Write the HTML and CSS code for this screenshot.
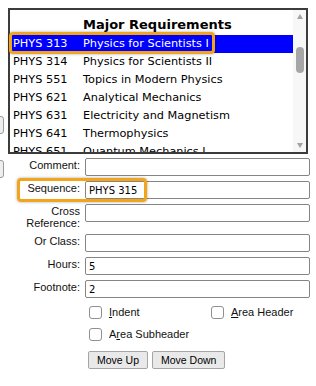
FILE: index.html
```html
<!DOCTYPE html>
<html>
<head>
<meta charset="utf-8">
<link rel="stylesheet" href="styles.css">
</head>
<body>
<div class="page">
  <div class="top">
    <div class="side">
      <div class="sidebtn"></div>
      <div class="sidebtn second"></div>
    </div>
    <div class="listbox">
      <div class="list">
        <div class="rows">
          <div class="row prev"><span>PHYS 303</span><span>Physics Laboratory</span></div>
          <div class="row head"><span></span><span>Major Requirements</span></div>
          <div class="row sel"><span>PHYS 313</span><span>Physics for Scientists I</span></div>
          <div class="row"><span>PHYS 314</span><span>Physics for Scientists II</span></div>
          <div class="row"><span>PHYS 551</span><span>Topics in Modern Physics</span></div>
          <div class="row"><span>PHYS 621</span><span>Analytical Mechanics</span></div>
          <div class="row"><span>PHYS 631</span><span>Electricity and Magnetism</span></div>
          <div class="row"><span>PHYS 641</span><span>Thermophysics</span></div>
          <div class="row"><span>PHYS 651</span><span>Quantum Mechanics I</span></div>
        </div>
      </div>
      <div class="scrollbar">
        <span class="arrow up"></span>
        <span class="thumb"></span>
        <span class="arrow down"></span>
      </div>
    </div>
  </div>

  <div class="form">
    <label class="lbl">Comment:</label>
    <input class="txt" type="text" value="">
    <label class="lbl">Sequence:</label>
    <input class="txt" type="text" value="PHYS 315">
    <label class="lbl">Cross<br>Reference:</label>
    <input class="txt" type="text" value="">
    <label class="lbl">Or Class:</label>
    <input class="txt" type="text" value="">
    <label class="lbl">Hours:</label>
    <input class="txt" type="text" value="5">
    <label class="lbl">Footnote:</label>
    <input class="txt" type="text" value="2">

    <div class="opts">
      <div class="optrow">
        <label class="opt first"><input class="cb" type="checkbox"><span><u>I</u>ndent</span></label>
        <label class="opt"><input class="cb" type="checkbox"><span><u>A</u>rea Header</span></label>
      </div>
      <div class="optrow">
        <label class="opt"><input class="cb" type="checkbox"><span>A<u>r</u>ea Subheader</span></label>
      </div>
      <div class="btns">
        <button class="btn" type="button">Move Up</button>
        <button class="btn" type="button">Move Down</button>
      </div>
    </div>
  </div>

  <div class="hl hl-row"></div>
  <div class="hl hl-seq"></div>
</div>
</body>
</html>
```

FILE: styles.css
```css
html, body {
  margin: 0;
  padding: 0;
  background: #ffffff;
  overflow: hidden;
}

.page {
  position: relative;
  width: 316px;
  height: 386px;
  padding-top: 8px;
  box-sizing: border-box;
  font-family: "Liberation Sans", Arial, sans-serif;
  color: #000;
}

.top {
  display: flex;
  align-items: flex-start;
}

.side {
  width: 8px;
  height: 146px;
  padding-top: 108px;
  box-sizing: border-box;
  display: flex;
  flex-direction: column;
}

.sidebtn {
  width: 24px;
  height: 18px;
  margin-left: -20px;
  box-sizing: border-box;
  border: 1px solid #9a9a9a;
  border-radius: 3px;
  background: #efefef;
  flex: none;
}

.sidebtn.second {
  margin-top: 26px;
}

.listbox {
  width: 300px;
  height: 146px;
  box-sizing: border-box;
  border: 2px solid #3c3c3c;
  display: flex;
  background: #fff;
}

.list {
  flex: 1;
  overflow: hidden;
}

.rows {
  margin-top: -14px;
  font-family: "DejaVu Sans", Verdana, sans-serif;
  font-size: 11.3px;
}

.row {
  display: grid;
  grid-template-columns: 70px 1fr;
  height: 18px;
  line-height: 18px;
  padding-left: 3px;
  white-space: nowrap;
}

.row.head {
  height: 21px;
  line-height: 21px;
  font-weight: bold;
  font-size: 13px;
}

.row.sel {
  background: #0000ff;
  color: #ffffff;
}

.scrollbar {
  width: 13px;
  background: #f7f7f7;
  display: flex;
  flex-direction: column;
  align-items: center;
}

.arrow {
  width: 0;
  height: 0;
  border-left: 3.5px solid transparent;
  border-right: 3.5px solid transparent;
}

.arrow.up {
  margin-top: 4px;
  border-bottom: 5px solid #a3a3a3;
}

.arrow.down {
  margin-top: auto;
  margin-bottom: 4px;
  border-top: 5px solid #a3a3a3;
}

.thumb {
  width: 8px;
  height: 26px;
  margin-top: 28px;
  border-radius: 4px;
  background: #a6a6a6;
}

.form {
  display: grid;
  grid-template-columns: 80px 225px;
  column-gap: 5px;
  row-gap: 5px;
  margin-top: 4px;
  align-items: start;
}

.lbl {
  font-size: 11px;
  line-height: 12px;
  text-align: right;
  padding-top: 1px;
  color: #111;
}

.txt {
  height: 18px;
  width: 225px;
  box-sizing: border-box;
  margin: 0;
  border: 1px solid #858585;
  border-radius: 2px;
  padding: 0 3px;
  font-family: "DejaVu Sans", Verdana, sans-serif;
  font-size: 10px;
  color: #000;
  background: #fff;
  outline: none;
}

.opts {
  grid-column: 2;
  margin-top: 3px;
  display: flex;
  flex-direction: column;
  gap: 9px;
  font-size: 11px;
}

.optrow {
  display: flex;
  padding-left: 4px;
  height: 13px;
}

.opt {
  display: flex;
  align-items: center;
  gap: 7px;
  line-height: 13px;
  color: #111;
}

.opt.first {
  width: 122px;
}

.opt u {
  text-underline-offset: 1px;
}

.cb {
  appearance: none;
  -webkit-appearance: none;
  width: 13px;
  height: 13px;
  margin: 0;
  box-sizing: border-box;
  border: 1px solid #909090;
  border-radius: 3px;
  background: #fff;
  flex: none;
}

.btns {
  display: flex;
  gap: 4px;
  margin-top: 1px;
  padding-left: 3px;
}

.btn {
  height: 18px;
  margin: 0;
  padding: 0 8px;
  box-sizing: border-box;
  border: 1px solid #a5a5a5;
  border-radius: 2px;
  background: #e9e9e9;
  font-family: "Liberation Sans", Arial, sans-serif;
  font-size: 10.5px;
  color: #000;
  line-height: 16px;
}

.hl {
  position: absolute;
  box-sizing: border-box;
  border: 3px solid #f2a51a;
  border-radius: 4px;
  box-shadow: 0 0 3px rgba(0, 0, 0, 0.35);
  pointer-events: none;
}

.hl-row {
  left: 9px;
  top: 32px;
  width: 206px;
  height: 22px;
}

.hl-seq {
  left: 17px;
  top: 178px;
  width: 130px;
  height: 24px;
}
```
